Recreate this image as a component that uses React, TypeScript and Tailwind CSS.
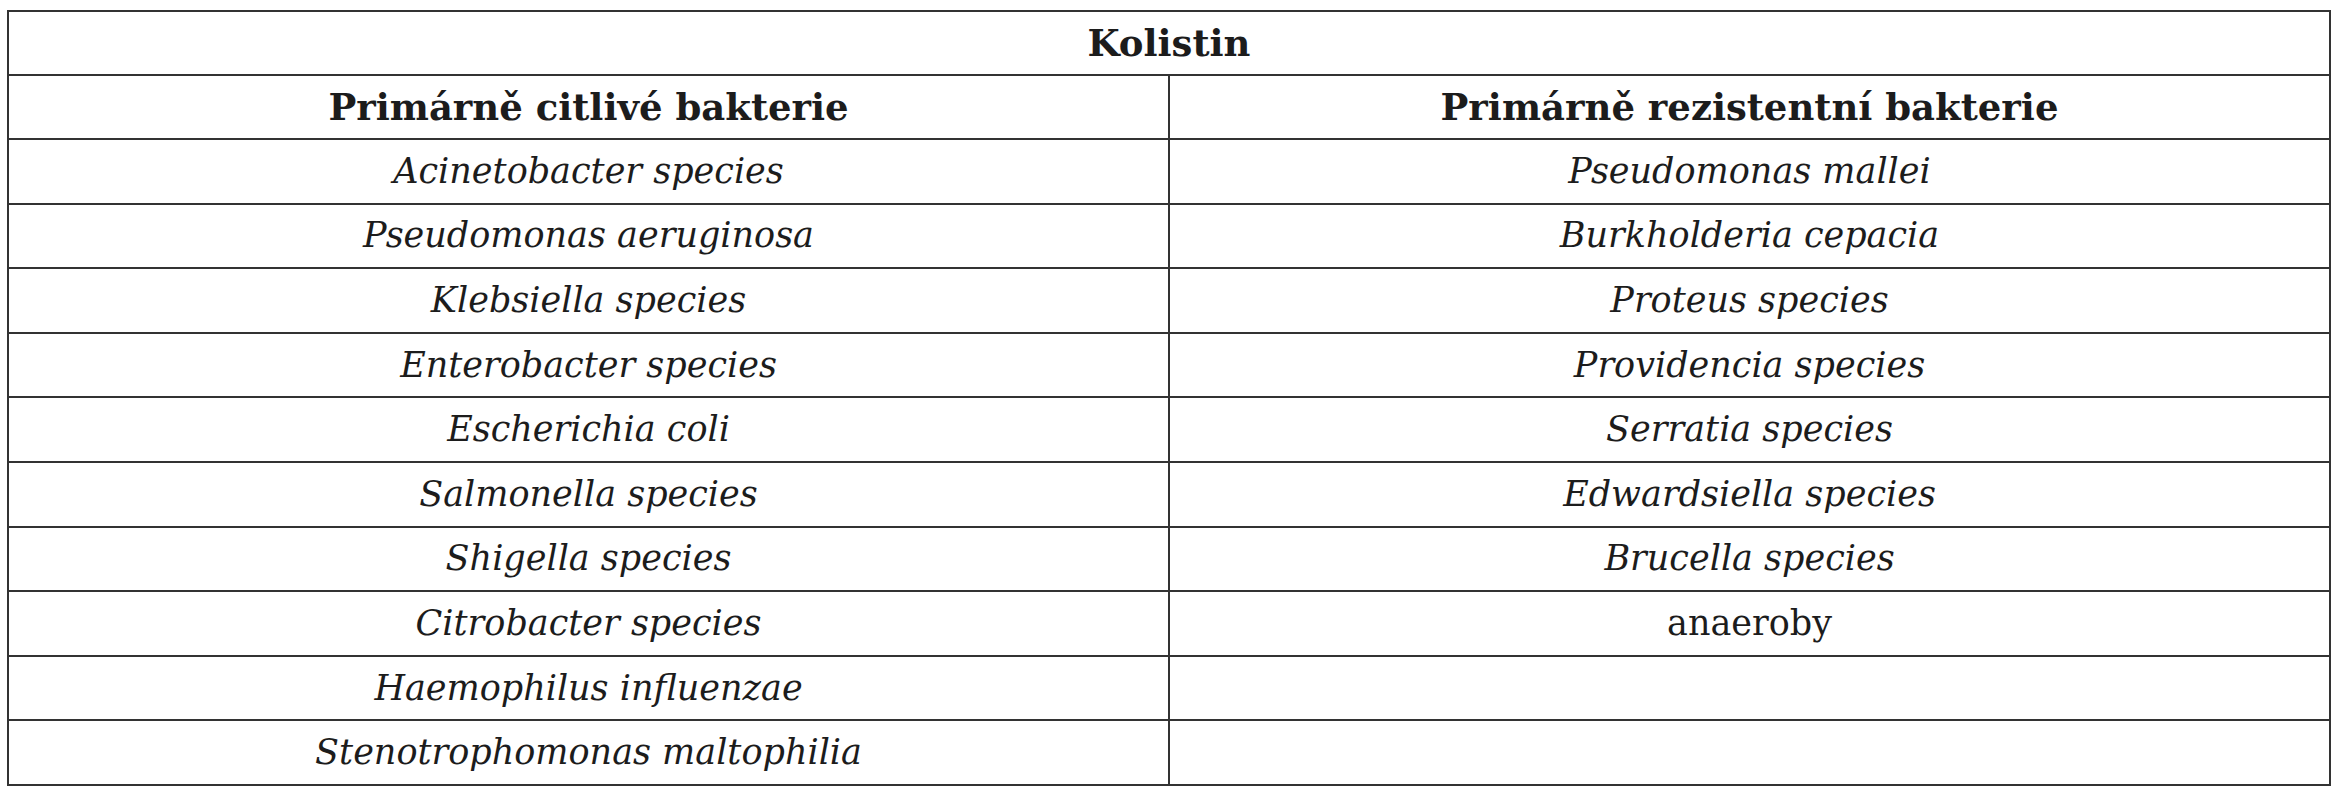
import React from "react";

const left = [
  "Acinetobacter species",
  "Pseudomonas aeruginosa",
  "Klebsiella species",
  "Enterobacter species",
  "Escherichia coli",
  "Salmonella species",
  "Shigella species",
  "Citrobacter species",
  "Haemophilus influenzae",
  "Stenotrophomonas maltophilia",
];

const right: { t: string; italic: boolean }[] = [
  { t: "Pseudomonas mallei", italic: true },
  { t: "Burkholderia cepacia", italic: true },
  { t: "Proteus species", italic: true },
  { t: "Providencia species", italic: true },
  { t: "Serratia species", italic: true },
  { t: "Edwardsiella species", italic: true },
  { t: "Brucella species", italic: true },
  { t: "anaeroby", italic: false },
  { t: "", italic: false },
  { t: "", italic: false },
];

export default function App() {
  return (
    <div className="w-[2343px] h-[800px] bg-white pt-[10px] pl-[7px] font-['DejaVu_Serif',serif] text-[#1c1c1c]">
      <table className="w-[2324px] border-collapse table-fixed">
        <tbody>
          <tr className="h-[64px]">
            <th colSpan={2} className="border-2 border-[#333] text-[37px] leading-none font-bold text-center align-middle">
              Kolistin
            </th>
          </tr>
          <tr className="h-[64px]">
            <th className="w-1/2 border-2 border-[#333] text-[37px] leading-none font-bold text-center align-middle">
              Primárně citlivé bakterie
            </th>
            <th className="w-1/2 border-2 border-[#333] text-[37px] leading-none font-bold text-center align-middle">
              Primárně rezistentní bakterie
            </th>
          </tr>
          {left.map((l, i) => (
            <tr key={i} className="h-[64.6px]">
              <td className="border-2 border-[#333] text-[35px] leading-none italic text-center align-middle">{l}</td>
              <td
                className={
                  right[i].italic
                    ? "border-2 border-[#333] text-[35px] leading-none italic text-center align-middle"
                    : "border-2 border-[#333] text-[35px] leading-none text-center align-middle"
                }
              >
                {right[i].t}
              </td>
            </tr>
          ))}
        </tbody>
      </table>
    </div>
  );
}
